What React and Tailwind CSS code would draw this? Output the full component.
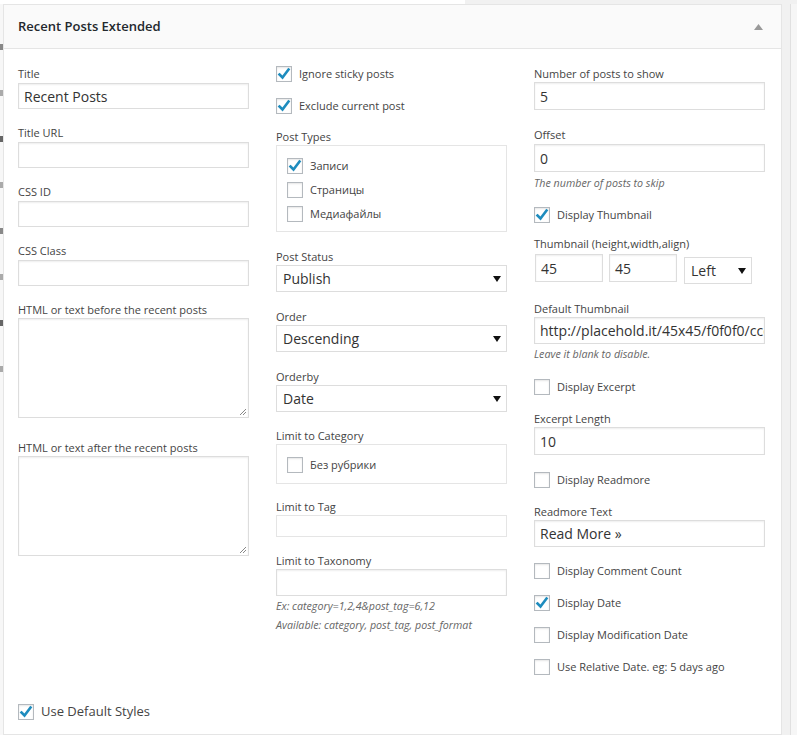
import React from "react";

const Check = ({ checked }) => (
  <span className="flex h-[16px] w-[16px] shrink-0 items-center justify-center border border-[#b4b9be] bg-white shadow-[inset_0_1px_2px_rgba(0,0,0,0.1)]">
    {checked && (
      <svg width="14" height="14" viewBox="0 0 14 14">
        <path d="M2.5 7.5 L5.5 10.5 L11.5 2.5" fill="none" stroke="#1e8cbe" strokeWidth="2.6" strokeLinecap="square" />
      </svg>
    )}
  </span>
);

const CheckRow = ({ checked, label, className = "" }) => (
  <div className={"flex h-[16px] items-center gap-[7px] " + className}>
    <Check checked={checked} />
    <span className="text-[11px] text-[#444]">{label}</span>
  </div>
);

const Label = ({ children, className = "" }) => (
  <div className={"h-[16px] text-[11px] leading-[16px] text-[#444] " + className}>{children}</div>
);

const Input = ({ value = "", className = "h-[27px]" }) => (
  <div className={"flex items-center overflow-hidden whitespace-nowrap border border-[#ddd] bg-white px-[5px] text-[14px] text-[#333] shadow-[inset_0_1px_2px_rgba(0,0,0,0.07)] " + className}>
    {value}
  </div>
);

const Select = ({ value, className = "" }) => (
  <div className={"flex h-[27px] items-center justify-between border border-[#ddd] bg-white pl-[6px] pr-[5px] text-[14px] text-[#333] " + className}>
    <span>{value}</span>
    <svg width="8" height="6" viewBox="0 0 8 6">
      <polygon points="0,0 8,0 4,6" fill="#111" />
    </svg>
  </div>
);

const TextArea = () => (
  <div className="relative h-[100px] border border-[#ddd] bg-white shadow-[inset_0_1px_2px_rgba(0,0,0,0.07)]">
    <svg className="absolute bottom-[2px] right-[2px]" width="7" height="7" viewBox="0 0 7 7">
      <path d="M1 7 L7 1 M4 7 L7 4" stroke="#888" strokeWidth="1" />
    </svg>
  </div>
);

const Help = ({ children, className = "" }) => (
  <div className={"text-[10.7px] italic leading-[19px] text-[#666] " + className}>{children}</div>
);

export default function App() {
  return (
    <div className="min-h-[735px] bg-[#f1f1f1] font-['Open_Sans',sans-serif]">
      <div className="h-[4px] w-[465px] bg-white" />
      <div className="flex">
        <div className="flex w-[3px] flex-col gap-[40px] bg-[#f7f7f7] pt-[40px]">
          <div className="h-[6px] bg-[#888]" />
          <div className="h-[6px] bg-[#aaa]" />
          <div className="h-[6px] bg-[#666]" />
          <div className="h-[6px] bg-[#aaa]" />
          <div className="h-[6px] bg-[#888]" />
          <div className="h-[6px] bg-[#aaa]" />
          <div className="h-[6px] bg-[#666]" />
          <div className="h-[6px] bg-[#aaa]" />
        </div>
        <div className="w-[779px] border border-[#e5e5e5] bg-white min-h-[731px]">
          <div className="flex h-[44px] items-center justify-between border-b border-[#e5e5e5] bg-[#fafafa] pl-[14px] pr-[18px]">
            <span className="text-[13px] font-semibold text-[#23282d]">Recent Posts Extended</span>
            <svg width="9" height="6" viewBox="0 0 9 6">
              <polygon points="0,6 9,6 4.5,0" fill="#999" />
            </svg>
          </div>

          <div className="px-[14px] pt-[17px]">
            <div className="grid grid-cols-[231px_231px_231px] gap-x-[27px]">
              {/* left column */}
              <div className="flex flex-col">
                <Label>Title</Label>
                <Input value="Recent Posts" className="mt-[1px] h-[26px]" />
                <Label className="mt-[16px]">Title URL</Label>
                <Input className="mt-[1px] h-[26px]" />
                <Label className="mt-[16px]">CSS ID</Label>
                <Input className="mt-[1px] h-[26px]" />
                <Label className="mt-[16px]">CSS Class</Label>
                <Input className="mt-[1px] h-[26px]" />
                <Label className="mt-[16px]">HTML or text before the recent posts</Label>
                <TextArea />
                <Label className="mt-[22px]">HTML or text after the recent posts</Label>
                <TextArea />
              </div>

              {/* middle column */}
              <div className="flex flex-col">
                <CheckRow checked label="Ignore sticky posts" />
                <CheckRow checked label="Exclude current post" className="mt-[16px]" />
                <Label className="mt-[15px]">Post Types</Label>
                <div className="flex h-[87px] flex-col gap-[8px] border border-[#e5e5e5] pl-[10px] pt-[12px]">
                  <CheckRow checked label="Записи" />
                  <CheckRow label="Страницы" />
                  <CheckRow label="Медиафайлы" />
                </div>
                <Label className="mt-[17px]">Post Status</Label>
                <Select value="Publish" />
                <Label className="mt-[17px]">Order</Label>
                <Select value="Descending" />
                <Label className="mt-[17px]">Orderby</Label>
                <Select value="Date" />
                <Label className="mt-[16px]">Limit to Category</Label>
                <div className="flex h-[40px] items-center border border-[#e5e5e5] pl-[10px] pt-[2px]">
                  <CheckRow label="Без рубрики" />
                </div>
                <Label className="mt-[15px]">Limit to Tag</Label>
                <div className="h-[22px] border border-[#e5e5e5]" />
                <Label className="mt-[16px]">Limit to Taxonomy</Label>
                <Input className="h-[27px]" />
                <Help className="mt-[1px]">Ex: category=1,2,4&amp;post_tag=6,12</Help>
                <Help>Available: category, post_tag, post_format</Help>
              </div>

              {/* right column */}
              <div className="flex flex-col">
                <Label>Number of posts to show</Label>
                <Input value="5" className="mt-[0px] h-[28px]" />
                <Label className="mt-[17px]">Offset</Label>
                <Input value="0" className="mt-[1px] h-[28px]" />
                <Help className="mt-[1px] leading-[20px]">The number of posts to skip</Help>
                <CheckRow checked label="Display Thumbnail" className="mt-[14px]" />
                <Label className="mt-[13px]">Thumbnail (height,width,align)</Label>
                <div className="mt-[2px] flex items-start">
                  <Input value="45" className="ml-[1px] h-[28px] w-[68px]" />
                  <Input value="45" className="ml-[6px] h-[28px] w-[68px]" />
                  <Select value="Left" className="ml-[7px] mt-[3px] w-[68px]" />
                </div>
                <Label className="mt-[17px]">Default Thumbnail</Label>
                <Input value="http://placehold.it/45x45/f0f0f0/ccc" className="mt-[0px] h-[27px]" />
                <Help className="mt-[1px]">Leave it blank to disable.</Help>
                <CheckRow label="Display Excerpt" className="mt-[15px]" />
                <Label className="mt-[16px]">Excerpt Length</Label>
                <Input value="10" className="mt-[0px] h-[28px]" />
                <CheckRow label="Display Readmore" className="mt-[17px]" />
                <Label className="mt-[16px]">Readmore Text</Label>
                <Input value="Read More »" className="mt-[0px] h-[27px]" />
                <CheckRow label="Display Comment Count" className="mt-[16px]" />
                <CheckRow checked label="Display Date" className="mt-[16px]" />
                <CheckRow label="Display Modification Date" className="mt-[16px]" />
                <CheckRow label="Use Relative Date. eg: 5 days ago" className="mt-[16px]" />
              </div>
            </div>

            <div className="mt-[29px] flex h-[16px] items-center gap-[7px]">
              <Check checked />
              <span className="text-[13px] text-[#444]">Use Default Styles</span>
            </div>
          </div>
        </div>
        <div className="flex flex-1 bg-[#f1f1f1]">
          <div className="ml-[8px] w-[1px] bg-[#e0e0e0]" />
          <div className="flex-1 bg-[#f6f6f6]" />
        </div>
      </div>
    </div>
  );
}
